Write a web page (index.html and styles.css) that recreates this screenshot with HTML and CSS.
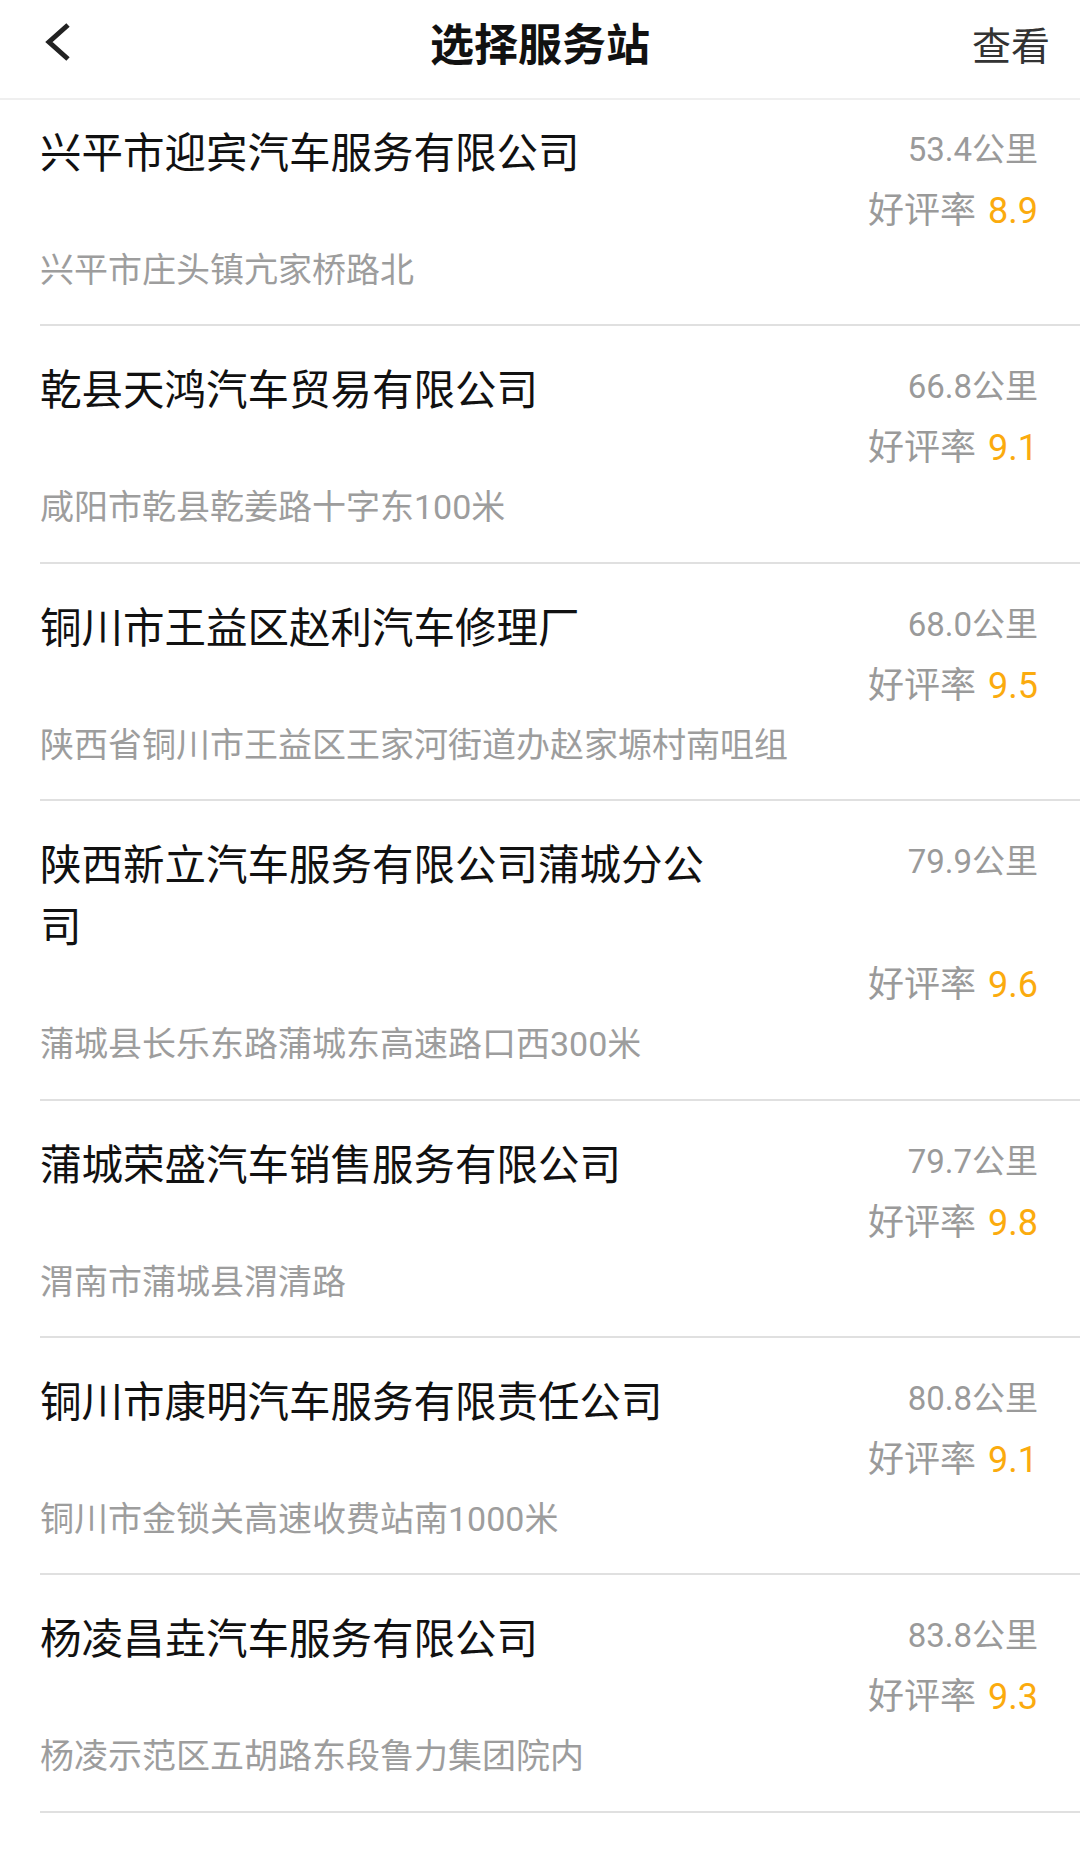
FILE: index.html
```html
<!DOCTYPE html>
<html lang="zh-CN">
<head>
<meta charset="utf-8">
<title>选择服务站</title>
<link rel="stylesheet" href="styles.css">
</head>
<body>
<div class="app">
  <header class="topbar">
    <div class="back">
      <svg class="back-icon" width="26" height="40" viewBox="0 0 26 40" aria-hidden="true">
        <polyline points="23,3 4,20 23,37" fill="none" stroke="#222" stroke-width="5" stroke-linecap="butt" stroke-linejoin="miter"/>
      </svg>
    </div>
    <h1 class="topbar-title">选择服务站</h1>
    <div class="topbar-action">查看</div>
  </header>
  <main class="viewport">
    <ul class="stations">
      <li class="station">
        <div class="station-top"><div class="station-name">兴平市迎宾汽车服务有限公司</div><div class="station-dist">53.4公里</div></div>
        <div class="station-rating"><span class="rating-label">好评率</span><span class="rating-score">8.9</span></div>
        <div class="station-addr">兴平市庄头镇亢家桥路北</div>
      </li>
      <li class="station">
        <div class="station-top"><div class="station-name">乾县天鸿汽车贸易有限公司</div><div class="station-dist">66.8公里</div></div>
        <div class="station-rating"><span class="rating-label">好评率</span><span class="rating-score">9.1</span></div>
        <div class="station-addr">咸阳市乾县乾姜路十字东100米</div>
      </li>
      <li class="station">
        <div class="station-top"><div class="station-name">铜川市王益区赵利汽车修理厂</div><div class="station-dist">68.0公里</div></div>
        <div class="station-rating"><span class="rating-label">好评率</span><span class="rating-score">9.5</span></div>
        <div class="station-addr">陕西省铜川市王益区王家河街道办赵家塬村南咀组</div>
      </li>
      <li class="station">
        <div class="station-top"><div class="station-name">陕西新立汽车服务有限公司蒲城分公司</div><div class="station-dist">79.9公里</div></div>
        <div class="station-rating"><span class="rating-label">好评率</span><span class="rating-score">9.6</span></div>
        <div class="station-addr">蒲城县长乐东路蒲城东高速路口西300米</div>
      </li>
      <li class="station">
        <div class="station-top"><div class="station-name">蒲城荣盛汽车销售服务有限公司</div><div class="station-dist">79.7公里</div></div>
        <div class="station-rating"><span class="rating-label">好评率</span><span class="rating-score">9.8</span></div>
        <div class="station-addr">渭南市蒲城县渭清路</div>
      </li>
      <li class="station">
        <div class="station-top"><div class="station-name">铜川市康明汽车服务有限责任公司</div><div class="station-dist">80.8公里</div></div>
        <div class="station-rating"><span class="rating-label">好评率</span><span class="rating-score">9.1</span></div>
        <div class="station-addr">铜川市金锁关高速收费站南1000米</div>
      </li>
      <li class="station">
        <div class="station-top"><div class="station-name">杨凌昌垚汽车服务有限公司</div><div class="station-dist">83.8公里</div></div>
        <div class="station-rating"><span class="rating-label">好评率</span><span class="rating-score">9.3</span></div>
        <div class="station-addr">杨凌示范区五胡路东段鲁力集团院内</div>
      </li>
    </ul>
  </main>
</div>
</body>
</html>
```

FILE: styles.css
```css
* {
  box-sizing: border-box;
}

html, body {
  margin: 0;
  padding: 0;
  background: #ffffff;
}

body {
  font-family: "Roboto", "Noto Sans CJK SC", sans-serif;
  color: #111111;
}

.app {
  width: 1080px;
  height: 1854px;
  display: flex;
  flex-direction: column;
  overflow: hidden;
  background: #ffffff;
}

.topbar {
  flex: 0 0 100px;
  height: 100px;
  display: grid;
  grid-template-columns: 1fr auto 1fr;
  align-items: center;
  padding: 0 30px 14px 30px;
  border-bottom: 2px solid #efefef;
  background: #ffffff;
  position: relative;
  z-index: 1;
}

.back {
  display: flex;
  align-items: center;
  padding-left: 15px;
}

.back-icon {
  display: block;
}

.topbar-title {
  margin: 0;
  font-family: "Noto Sans CJK SC", sans-serif;
  font-size: 44px;
  font-weight: 700;
  color: #111111;
  line-height: 60px;
}

.topbar-action {
  justify-self: end;
  font-family: "Noto Sans CJK SC", sans-serif;
  font-size: 39px;
  color: #333333;
  line-height: 60px;
  padding-top: 2px;
}

.viewport {
  flex: 1 1 auto;
  overflow: hidden;
}

.stations {
  list-style: none;
  margin: -11px 0 0 0;
  padding: 0;
}

.station {
  margin-left: 40px;
  padding: 30px 42px 25.4px 0;
  border-bottom: 2px solid #e0e0e0;
}

.station-top {
  display: flex;
  align-items: flex-start;
}

.station-name {
  max-width: 690px;
  font-family: "Noto Sans CJK SC", sans-serif;
  font-size: 41.5px;
  line-height: 62px;
  color: #111111;
}

.station-dist {
  margin-left: auto;
  flex: 0 0 auto;
  font-size: 33px;
  line-height: 62px;
  color: #9a9a9a;
  white-space: nowrap;
}

.station-rating {
  display: flex;
  justify-content: flex-end;
  align-items: baseline;
  gap: 12px;
  line-height: 60px;
}

.rating-label {
  font-size: 36px;
  color: #9a9a9a;
}

.rating-score {
  font-size: 36px;
  color: #fbab0e;
}

.station-addr {
  font-size: 34px;
  line-height: 58px;
  color: #9d9d9d;
}
```
